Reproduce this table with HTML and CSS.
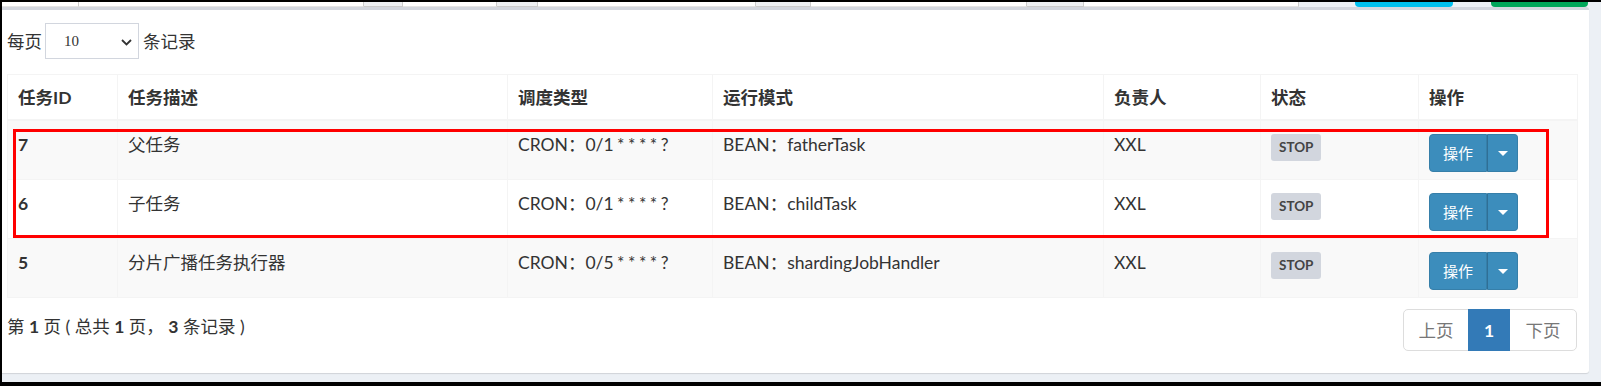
FILE: index.html
```html
<!DOCTYPE html>
<html lang="zh-CN">
<head>
<meta charset="utf-8">
<title>任务列表</title>
<link rel="stylesheet" href="styles.css">
</head>
<body>
<div class="frame">
  <div class="topstrip">
    <span class="seg inp s1"></span>
    <span class="seg inp s2"></span>
    <span class="seg addon s3"></span>
    <span class="seg inp s4"></span>
    <span class="seg addon s5"></span>
    <span class="seg inp s6"></span>
    <span class="seg addon s7"></span>
    <span class="seg inp s8"></span>
    <span class="seg addon s9"></span>
    <span class="seg inp s10"></span>
    <span class="seg gap s11"></span>
    <span class="seg btn-info s12"></span>
    <span class="seg gap s13"></span>
    <span class="seg btn-success s14"></span>
  </div>
  <div class="box">
    <div class="length">
      <span>每页</span>
      <div class="select">
        <span class="select-val">10</span>
        <svg class="chev" width="11" height="7" viewBox="0 0 11 7"><path d="M1 1 L5.5 5.5 L10 1" fill="none" stroke="#333" stroke-width="1.8"/></svg>
      </div>
      <span class="after">条记录</span>
    </div>
    <table class="grid">
      <thead>
        <tr>
          <th class="c-id">任务ID</th>
          <th class="c-desc">任务描述</th>
          <th class="c-type">调度类型</th>
          <th class="c-mode">运行模式</th>
          <th class="c-owner">负责人</th>
          <th class="c-state">状态</th>
          <th class="c-op">操作</th>
        </tr>
      </thead>
      <tbody>
        <tr class="odd">
          <td class="id">7</td>
          <td>父任务</td>
          <td class="cron">CRON：0/1 * * * * ?</td>
          <td>BEAN：fatherTask</td>
          <td>XXL</td>
          <td><span class="label">STOP</span></td>
          <td><div class="btn-group"><span class="btn-main">操作</span><span class="btn-caret"><i class="caret"></i></span></div></td>
        </tr>
        <tr>
          <td class="id">6</td>
          <td>子任务</td>
          <td class="cron">CRON：0/1 * * * * ?</td>
          <td>BEAN：childTask</td>
          <td>XXL</td>
          <td><span class="label">STOP</span></td>
          <td><div class="btn-group"><span class="btn-main">操作</span><span class="btn-caret"><i class="caret"></i></span></div></td>
        </tr>
        <tr class="odd">
          <td class="id">5</td>
          <td>分片广播任务执行器</td>
          <td class="cron">CRON：0/5 * * * * ?</td>
          <td>BEAN：shardingJobHandler</td>
          <td>XXL</td>
          <td><span class="label">STOP</span></td>
          <td><div class="btn-group"><span class="btn-main">操作</span><span class="btn-caret"><i class="caret"></i></span></div></td>
        </tr>
      </tbody>
    </table>
    <div class="foot">
      <div class="info">第 <b>1</b> 页 ( 总共 <b>1</b> 页， <b>3</b> 条记录 )</div>
      <ul class="pager">
        <li class="first"><a>上页</a></li>
        <li class="active"><a>1</a></li>
        <li class="last"><a>下页</a></li>
      </ul>
    </div>
  </div>
  <div class="mark"></div>
</div>
</body>
</html>
```

FILE: styles.css
```css
* { box-sizing: border-box; }
html, body { margin: 0; padding: 0; }
body {
  background: #000;
  font-family: "Lato", "Noto Sans CJK SC", sans-serif;
  font-size: 17.5px;
  color: #333;
}
.frame {
  position: relative;
  width: 1601px;
  height: 386px;
  border-left: 2px solid #000;
  border-top: 2px solid #000;
  border-bottom: 4px solid #000;
  background: #ecf0f5;
  overflow: hidden;
}
.topstrip {
  display: flex;
  height: 5px;
}
.seg { display: block; height: 5px; flex: none; }
.inp { background: #fff; border-right: 1px solid #ccc; border-bottom: 1px solid #e4e4e4; }
.addon { background: #eef0f3; border-right: 1px solid #ccc; border-bottom: 1px solid #ccc; }
.gap { background: #ecf0f5; }
.btn-info { background: #00c0ef; border-radius: 0 0 4px 4px; }
.btn-success { background: #00a65a; border-radius: 0 0 4px 4px; }
.s1 { width: 77px; }
.s2 { width: 285px; }
.s3 { width: 39px; }
.s4 { width: 94px; }
.s5 { width: 41px; }
.s6 { width: 218px; }
.s7 { width: 55px; }
.s8 { width: 216px; }
.s9 { width: 57px; }
.s10 { width: 215px; }
.s11 { width: 56px; }
.s12 { width: 98px; }
.s13 { width: 38px; }
.s14 { width: 97px; }

.box {
  width: 1587px;
  height: 366px;
  background: #fff;
  border-top: 3px solid #d2d6de;
  box-shadow: 0 1px 1px rgba(0,0,0,0.12);
  border-radius: 0 3px 3px 0;
  padding: 13px 12px 0 5px;
}
.length {
  display: flex;
  align-items: center;
  height: 36px;
  line-height: 25px;
}
.select {
  width: 94px;
  height: 36px;
  margin-left: 3px;
  border: 1px solid #d2d6de;
  display: flex;
  align-items: center;
  justify-content: space-between;
  padding: 0 6px 0 18px;
  font-family: "Liberation Serif", serif;
  font-size: 15px;
  color: #333;
}
.chev { display: block; margin-top: 2px; }
.after { margin-left: 4px; }

.grid {
  margin-top: 15px;
  width: 1570px;
  table-layout: fixed;
  border-collapse: collapse;
  line-height: 25px;
}
.grid th, .grid td {
  border: 1px solid #f4f4f4;
  text-align: left;
  vertical-align: top;
  padding: 10px 10px 9px;
  white-space: nowrap;
}
.grid th {
  font-weight: 700;
  border-bottom: 2px solid #f4f4f4;
}
.grid td { padding: 11px 10px 7px; }
.grid tr.odd td { background: #f9f9f9; }
.grid td.id { font-weight: 700; }
.grid td.cron { word-spacing: -1px; }
.c-id { width: 110px; }
.c-desc { width: 390px; }
.c-type { width: 205px; }
.c-mode { width: 391px; }
.c-owner { width: 157px; }
.c-state { width: 158px; }
.c-op { width: 159px; }

.label {
  display: inline-block;
  margin-top: 2px;
  height: 27px;
  line-height: 27px;
  padding: 0 8px;
  background: #d2d6de;
  color: #444;
  font-size: 13.5px;
  font-weight: 700;
  border-radius: 3px;
  vertical-align: top;
}
.btn-group {
  display: flex;
  margin-top: 2px;
  height: 38px;
  width: 89px;
}
.btn-main, .btn-caret {
  display: flex;
  align-items: center;
  justify-content: center;
  background: #3c8dbc;
  border: 1px solid #367fa9;
  color: #fff;
  font-size: 15px;
}
.btn-main {
  width: 58px;
  border-radius: 4px 0 0 4px;
}
.btn-caret {
  width: 31px;
  border-left: 1px solid #2f6f96;
  border-radius: 0 4px 4px 0;
}
.caret {
  display: block;
  width: 0;
  height: 0;
  border-left: 5px solid transparent;
  border-right: 5px solid transparent;
  border-top: 5px solid #fff;
}

.foot {
  margin-top: 11px;
  width: 1570px;
  display: flex;
  justify-content: space-between;
  align-items: flex-start;
}
.info {
  padding-top: 5px;
  line-height: 25px;
}
.info b { font-weight: 700; }
.pager {
  list-style: none;
  margin: 0;
  padding: 0;
  display: flex;
}
.pager li a {
  display: block;
  padding: 7.5px 0;
  line-height: 25px;
  height: 42px;
  border: 1px solid #ddd;
  color: #777;
  background: #fff;
  text-align: center;
  white-space: nowrap;
}
.pager li + li a { margin-left: -1px; }
.pager li.first a { border-radius: 5px 0 0 5px; width: 66px; }
.pager li.last a { border-radius: 0 5px 5px 0; width: 68px; }
.pager li.active a {
  background: #337ab7;
  border-color: #337ab7;
  color: #fff;
  font-weight: 700;
  width: 42px;
  position: relative;
}

.mark {
  position: absolute;
  left: 11px;
  top: 127px;
  width: 1536px;
  height: 109px;
  border: 3px solid #ff0000;
  pointer-events: none;
}
```
